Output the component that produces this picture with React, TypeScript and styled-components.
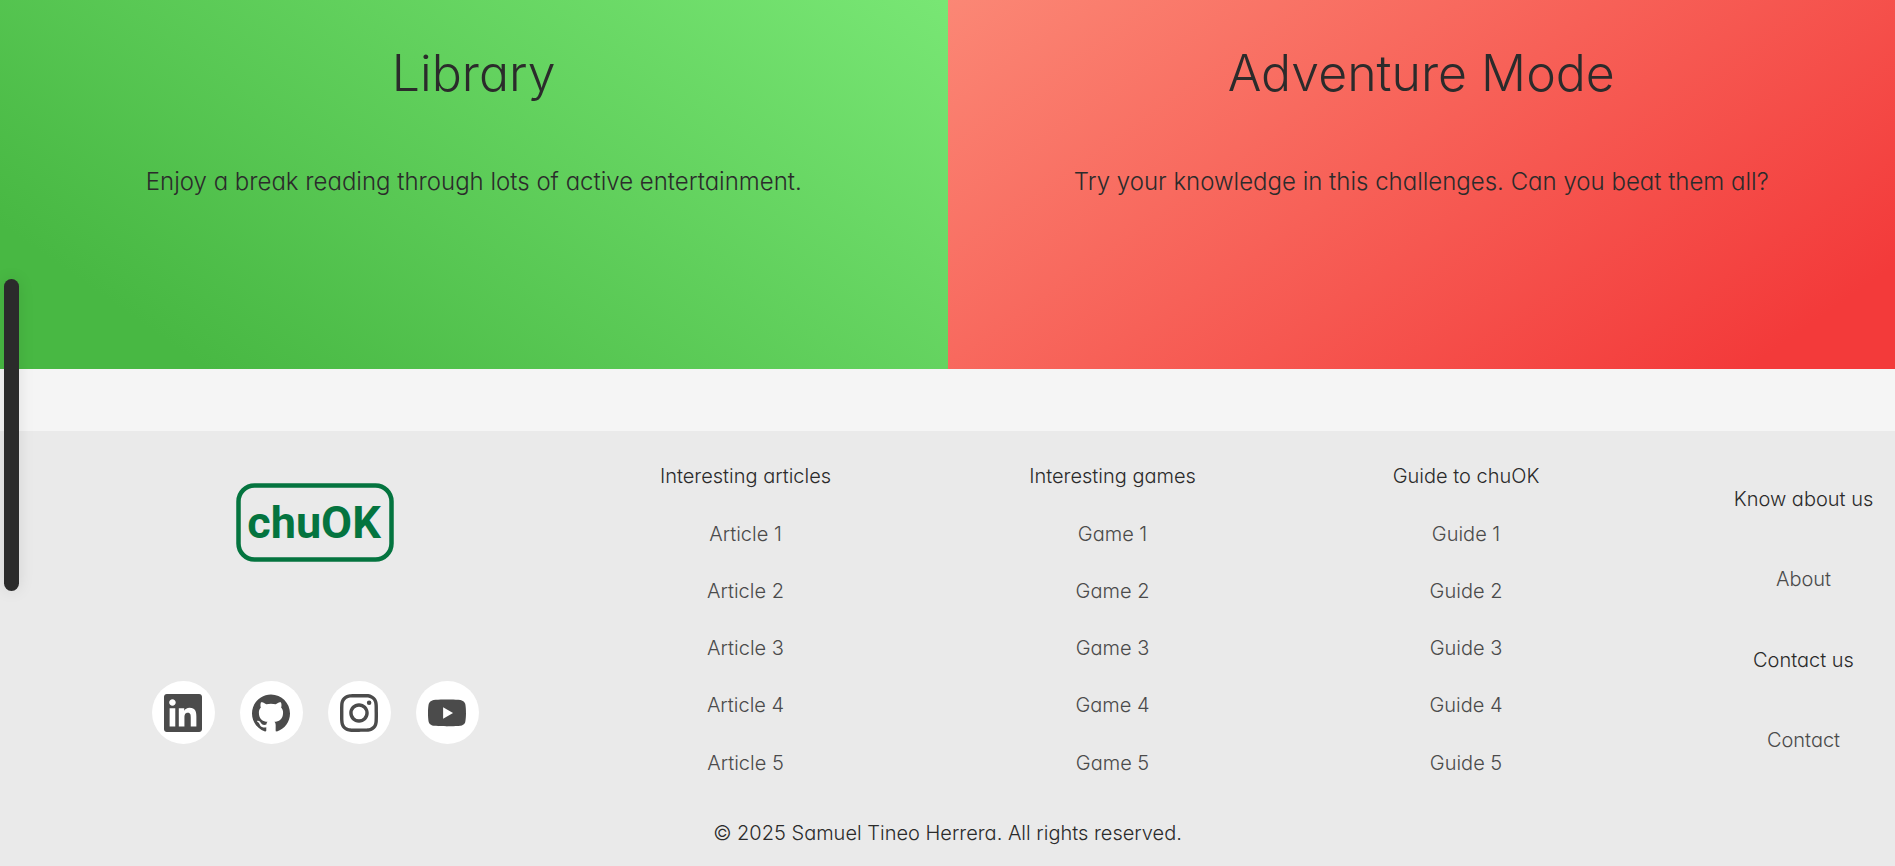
import React from "react";
import styled, { createGlobalStyle } from "styled-components";
import { SiGithub, SiInstagram, SiYoutube } from "react-icons/si";

const GlobalStyle = createGlobalStyle`
  * { box-sizing: border-box; }
  body {
    margin: 0;
    background: #f5f5f5;
    color: #2b2b2b;
    font-family: Inter, "Open Sans", sans-serif;
    font-weight: 300;
    font-feature-settings: "cv11";
  }
`;

const Modes = styled.main`
  display: grid;
  grid-template-columns: 1fr 1fr;
  margin-bottom: 62px;
`;

const ModeCard = styled.section<{ $background: string }>`
  display: flex;
  flex-direction: column;
  align-items: center;
  min-height: 369px;
  padding: 42px 24px 0;
  text-align: center;
  background: ${(p) => p.$background};
`;

const ModeTitle = styled.h2`
  margin: 0 0 62px;
  font-size: 50px;
  line-height: 62px;
  font-weight: 300;
`;

const ModeText = styled.p`
  margin: 0;
  font-size: 24px;
  line-height: 32px;
`;

const SideHandle = styled.div`
  position: fixed;
  left: 4px;
  top: 279px;
  width: 15px;
  height: 312px;
  border-radius: 8px;
  background: #2b2b2b;
  box-shadow: 0 0 16px rgba(0, 0, 0, 0.1);
`;

const FooterArea = styled.footer`
  background: #eaeaea;
  font-size: 20px;
  line-height: 26px;
`;

const FooterMain = styled.div`
  display: flex;
  min-height: 376px;
  padding: 1px 21px 0 0;
`;

const Brand = styled.div`
  flex: 1;
  display: flex;
  flex-direction: column;
  align-items: center;
  justify-content: space-between;
  padding: 51px 0 63px;
`;

const LinkColumns = styled.nav`
  display: flex;
  gap: 192px;
  margin-left: 27px;
`;

const LinkColumn = styled.div<{ $width: number }>`
  display: flex;
  flex-direction: column;
  align-items: center;
  justify-content: space-evenly;
  width: ${(p) => p.$width}px;
  white-space: nowrap;
`;

const ColumnHeading = styled.h3`
  margin: 0;
  font-size: inherit;
  font-weight: 300;
`;

const FooterLink = styled.a`
  color: #4b4b4b;
  text-decoration: none;
`;

const Socials = styled.div`
  display: flex;
  gap: 25px;
`;

const SocialLink = styled.a`
  display: flex;
  align-items: center;
  justify-content: center;
  width: 63px;
  height: 63px;
  border-radius: 50%;
  background: #fff;
  color: #4b4b4b;
`;

const Copyright = styled.p`
  margin: 0;
  padding: 13px 0 20px;
  text-align: center;
`;

const Logo = () => (
  <svg width="158" height="79" viewBox="0 0 158 79" role="img" aria-label="chuOK">
    <rect x="2.5" y="2.5" width="153" height="74" rx="16" fill="none" stroke="#04743f" strokeWidth="4.5" />
    <text x="78" y="55" textAnchor="middle" fontFamily="Roboto, sans-serif" fontWeight="700" fontSize="45" fill="#04743f">chuOK</text>
  </svg>
);

const LinkedinIcon = ({ size }: { size: number }) => (
  <svg width={size} height={size} viewBox="0 0 24 24" fill="currentColor" aria-hidden="true">
    <path d="M20.447 20.452h-3.554v-5.569c0-1.328-.027-3.037-1.852-3.037-1.853 0-2.136 1.445-2.136 2.939v5.667H9.351V9h3.414v1.561h.046c.477-.9 1.637-1.85 3.37-1.85 3.601 0 4.267 2.37 4.267 5.455v6.286zM5.337 7.433c-1.144 0-2.063-.926-2.063-2.065 0-1.138.92-2.063 2.063-2.063 1.14 0 2.064.925 2.064 2.063 0 1.139-.925 2.065-2.064 2.065zm1.782 13.019H3.555V9h3.564v11.452zM22.225 0H1.771C.792 0 0 .774 0 1.729v20.542C0 23.227.792 24 1.771 24h20.451C23.2 24 24 23.227 24 22.271V1.729C24 .774 23.2 0 22.222 0h.003z" />
  </svg>
);

const numbered = (name: string) => [1, 2, 3, 4, 5].map((n) => ({ text: `${name} ${n}` }));

const columns: { width: number; items: { text: string; heading?: boolean }[] }[] = [
  { width: 177, items: [{ text: "Interesting articles", heading: true }, ...numbered("Article")] },
  { width: 173, items: [{ text: "Interesting games", heading: true }, ...numbered("Game")] },
  { width: 150, items: [{ text: "Guide to chuOK", heading: true }, ...numbered("Guide")] },
  {
    width: 141,
    items: [
      { text: "Know about us", heading: true },
      { text: "About" },
      { text: "Contact us", heading: true },
      { text: "Contact" },
    ],
  },
];

const socials = [
  { name: "LinkedIn", Icon: LinkedinIcon },
  { name: "GitHub", Icon: SiGithub },
  { name: "Instagram", Icon: SiInstagram },
  { name: "YouTube", Icon: SiYoutube },
];

export default function App() {
  return (
    <>
      <GlobalStyle />
      <Modes>
        <ModeCard $background="linear-gradient(35deg, #48b843 14%, #7ae876 103%)">
          <ModeTitle>Library</ModeTitle>
          <ModeText>Enjoy a break reading through lots of active entertainment.</ModeText>
        </ModeCard>
        <ModeCard $background="linear-gradient(145deg, #fb8775 0%, #f33a3a 90%)">
          <ModeTitle>Adventure Mode</ModeTitle>
          <ModeText>Try your knowledge in this challenges. Can you beat them all?</ModeText>
        </ModeCard>
      </Modes>
      <FooterArea>
        <FooterMain>
          <Brand>
            <Logo />
            <Socials>
              {socials.map(({ name, Icon }) => (
                <SocialLink key={name} href="#" aria-label={name}>
                  <Icon size={38} />
                </SocialLink>
              ))}
            </Socials>
          </Brand>
          <LinkColumns>
            {columns.map((column) => (
              <LinkColumn key={column.items[0].text} $width={column.width}>
                {column.items.map((item) =>
                  item.heading ? (
                    <ColumnHeading key={item.text}>{item.text}</ColumnHeading>
                  ) : (
                    <FooterLink key={item.text} href="#">{item.text}</FooterLink>
                  )
                )}
              </LinkColumn>
            ))}
          </LinkColumns>
        </FooterMain>
        <Copyright>© 2025 Samuel Tineo Herrera. All rights reserved.</Copyright>
      </FooterArea>
      <SideHandle />
    </>
  );
}
